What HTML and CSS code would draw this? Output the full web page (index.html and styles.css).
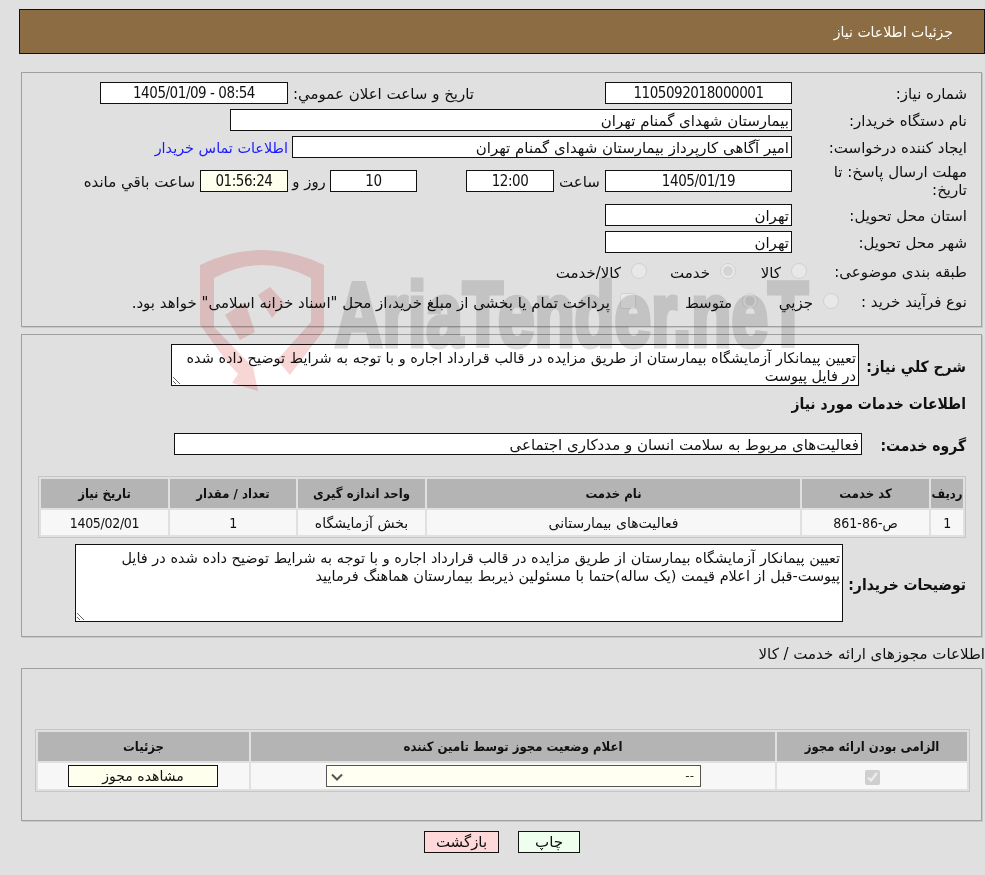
FILE: index.html
```html
<!DOCTYPE html>
<html lang="fa" dir="rtl">
<head>
<meta charset="utf-8">
<title>جزئیات اطلاعات نیاز</title>
<link rel="stylesheet" href="styles.css">
</head>
<body>
<main class="page">
  <header class="title-bar">جزئیات اطلاعات نیاز</header>

  <section class="panel panel-info">
    <div class="row">
      <div class="label">شماره نیاز:</div>
      <div class="field num w187">1105092018000001</div>
      <div class="label-mid">تاریخ و ساعت اعلان عمومي:</div>
      <div class="field num w188">08:54 - 1405/01/09</div>
    </div>
    <div class="row">
      <div class="label">نام دستگاه خریدار:</div>
      <div class="field start w562">بیمارستان شهدای گمنام تهران</div>
    </div>
    <div class="row">
      <div class="label">ایجاد کننده درخواست:</div>
      <div class="field start w500">امیر آگاهی کارپرداز بیمارستان شهدای گمنام تهران</div>
      <a class="contact" href="#">اطلاعات تماس خریدار</a>
    </div>
    <div class="row row-deadline">
      <div class="label label-wrap">مهلت ارسال پاسخ: تا تاریخ:</div>
      <div class="field num w187">1405/01/19</div>
      <div class="unit w51">ساعت</div>
      <div class="field num w88">12:00</div>
      <div class="spacer49"></div>
      <div class="field num w87">10</div>
      <div class="unit w42">روز و</div>
      <div class="field num w88 cream">01:56:24</div>
      <div class="remain">ساعت باقي مانده</div>
    </div>
    <div class="row row-province">
      <div class="label">استان محل تحویل:</div>
      <div class="field start w187">تهران</div>
    </div>
    <div class="row">
      <div class="label">شهر محل تحویل:</div>
      <div class="field start w187">تهران</div>
    </div>
    <div class="row row-category">
      <div class="label label-160">طبقه بندی موضوعی:</div>
      <label class="opt w71"><input type="radio" name="cat" disabled><span>کالا</span></label>
      <label class="opt w89"><input type="radio" name="cat" checked disabled><span>خدمت</span></label>
      <label class="opt"><input type="radio" name="cat" disabled><span>کالا/خدمت</span></label>
    </div>
    <div class="row row-process">
      <div class="label label-128">نوع فرآیند خرید :</div>
      <label class="opt w81"><input type="radio" name="proc" disabled><span>جزيي</span></label>
      <label class="opt w122"><input type="radio" name="proc" checked disabled><span>متوسط</span></label>
      <label class="opt"><input type="checkbox" disabled><span>پرداخت تمام یا بخشی از مبلغ خرید،از محل "اسناد خزانه اسلامی" خواهد بود.</span></label>
    </div>
  </section>

  <section class="panel panel-need">
    <div class="row row-desc">
      <div class="strong w107">شرح کلي نیاز:</div>
      <textarea class="area area-desc" readonly>تعیین پیمانکار آزمایشگاه بیمارستان از طریق مزایده در قالب قرارداد اجاره و با توجه به شرایط توضیح داده شده در فایل پیوست</textarea>
    </div>
    <h2 class="strong section-title">اطلاعات خدمات مورد نیاز</h2>
    <div class="row row-group">
      <div class="strong w104">گروه خدمت:</div>
      <div class="field start w688">فعالیت‌های مربوط به سلامت انسان و مددکاری اجتماعی</div>
    </div>
    <table class="grid grid-services">
      <colgroup><col class="c32"><col class="c127"><col class="c373"><col class="c127"><col class="c126"><col class="c127"></colgroup>
      <thead><tr><th>ردیف</th><th>کد خدمت</th><th>نام خدمت</th><th>واحد اندازه گیری</th><th>تعداد / مقدار</th><th>تاریخ نیاز</th></tr></thead>
      <tbody><tr><td class="num-cell">1</td><td class="num-cell">ص-86-861</td><td>فعالیت‌های بیمارستانی</td><td>بخش آزمایشگاه</td><td class="num-cell">1</td><td class="num-cell">1405/02/01</td></tr></tbody>
    </table>
    <div class="row row-notes">
      <div class="strong w123">توضیحات خریدار:</div>
      <textarea class="area area-notes" readonly>تعیین پیمانکار آزمایشگاه بیمارستان از طریق مزایده در قالب قرارداد اجاره و با توجه به شرایط توضیح داده شده در فایل پیوست-قبل از اعلام قیمت (یک ساله)حتما با مسئولین ذیربط بیمارستان هماهنگ فرمایید</textarea>
    </div>
  </section>

  <div class="license-title">اطلاعات مجوزهای ارائه خدمت / کالا</div>
  <section class="panel panel-license">
    <table class="grid grid-license">
      <colgroup><col class="c190"><col class="c524"><col class="c211"></colgroup>
      <thead><tr><th>الزامی بودن ارائه مجوز</th><th>اعلام وضعیت مجوز توسط تامین کننده</th><th>جزئیات</th></tr></thead>
      <tbody><tr>
        <td><input class="check" type="checkbox" checked disabled></td>
        <td><select class="status"><option>--</option></select></td>
        <td><button class="view" type="button">مشاهده مجوز</button></td>
      </tr></tbody>
    </table>
  </section>

  <div class="actions">
    <button class="btn btn-print" type="button">چاپ</button>
    <button class="btn btn-back" type="button">بازگشت</button>
  </div>
</main>
<svg class="watermark" width="985" height="400" viewBox="0 0 985 400">
  <path class="wm-red" fill-rule="evenodd" d="M200 265 Q262 235 324 265 L324 330 L290 375 L277 360 L311 322 L311 278 Q262 252 214 278 L214 327 L243 357 L253 367 L258 391 L232 383 L238 374 L228 363 L200 325 Z"/>
  <path class="wm-red" d="M270 287 L285 303 L272 318 L258 295 Z"/>
  <path class="wm-red" d="M225 315 L245 302 L255 332 L240 340 Z"/>
  <text class="wm-text" x="335" y="346" textLength="473" lengthAdjust="spacingAndGlyphs" direction="ltr">AriaTender.neT</text>
</svg>
</body>
</html>
```

FILE: styles.css
```css
* { box-sizing: border-box; }
html, body { margin: 0; padding: 0; }
body {
  width: 985px;
  height: 875px;
  overflow: hidden;
  position: relative;
  background: #e0e0e0;
  color: #111;
  font-family: "DejaVu Sans", sans-serif;
  font-size: 15px;
  line-height: 18px;
}
.watermark {
  position: absolute;
  left: 0;
  top: 0;
  z-index: 2;
  pointer-events: none;
  mix-blend-mode: multiply;
}
.wm-red { fill: #f9d6d6; }
.wm-text {
  font-family: "Liberation Sans", sans-serif;
  font-weight: 700;
  font-size: 90px;
  fill: #dedede;
  stroke: #dedede;
  stroke-width: 5;
}
.page { position: relative; z-index: 1; padding-top: 9px; }

.title-bar {
  height: 45px;
  margin-left: 19px;
  padding-right: 31px;
  display: flex;
  align-items: center;
  background: #8c6c42;
  border: 1px solid #111;
  color: #fff;
  font-size: 14px;
}
.panel {
  margin-left: 21px;
  margin-right: 3px;
  border: 1px solid #a0a0a0;
  box-shadow: 1px 1px 0 #c8c8c8;
}
.panel-info { height: 255px; margin-top: 18px; padding: 9px 14px 0 0; }
.panel-need { height: 303px; margin-top: 7px; padding: 9px 15px 0 0; }
.panel-license { height: 153px; margin-top: 5px; padding: 60px 11px 0 0; }

.row { display: flex; align-items: center; height: 22px; margin-bottom: 5px; }
.row-deadline { margin-top: 12px; margin-bottom: 12px; }
.row-category { margin-top: 7px; margin-bottom: 8px; }

.label { width: 175px; flex: none; white-space: nowrap; padding-top: 2px; }
.label-wrap { padding-left: 25px; white-space: normal; padding-top: 0; }
.label-160 { width: 160px; }
.label-128 { width: 128px; }
.label-mid { width: 317px; flex: none; padding: 2px 131px 0 0; white-space: nowrap; }

.field {
  height: 22px;
  flex: none;
  background: #fff;
  border: 1px solid #111;
  text-align: center;
  line-height: 20px;
  padding: 0 2px;
  white-space: nowrap;
  overflow: hidden;
}
.num {
  font-family: "DejaVu Sans Condensed", "DejaVu Sans", sans-serif;
  letter-spacing: -0.45px;
}
.start { text-align: start; padding-top: 1px; }
.cream { background: #ffffee; }
.w187 { width: 187px; }
.w188 { width: 188px; }
.w562 { width: 562px; }
.w500 { width: 500px; }
.w88 { width: 88px; }
.w87 { width: 87px; }
.w688 { width: 688px; }
.w51 { width: 51px; text-align: center; }
.w42 { width: 42px; text-align: center; }
.spacer49 { width: 49px; flex: none; }
.unit { flex: none; white-space: nowrap; padding-top: 2px; }
.remain { margin-right: 5px; white-space: nowrap; padding-top: 2px; }
.contact {
  margin-right: 4px;
  padding-top: 2px;
  color: #1a1aff;
  font-size: 14.4px;
  text-decoration: none;
  white-space: nowrap;
}

.opt { display: flex; align-items: center; gap: 10px; flex: none; white-space: nowrap; }
.opt span { position: relative; top: 2px; }
.opt input { width: 16px; height: 16px; margin: 0; flex: none; opacity: 0.6; }
.w71 { width: 71px; }
.w89 { width: 89px; }
.w81 { width: 81px; }
.w122 { width: 122px; }

.strong {
  font-family: "DejaVu Sans Condensed", "DejaVu Sans", sans-serif;
  font-weight: 700;
  font-size: 15.5px;
  flex: none;
  white-space: nowrap;
  padding-top: 4px;
}
.w107 { width: 107px; }
.w104 { width: 104px; }
.w123 { width: 123px; }
.section-title { margin: 0; height: 20px; padding-top: 2px; }

.area {
  display: block;
  flex: none;
  margin: 0;
  padding: 4px 2px 2px;
  background: #fff;
  border: 1px solid #111;
  border-radius: 0;
  color: #111;
  font: inherit;
  font-size: 14.5px;
  line-height: 18px;
  overflow: hidden;
}
.area-desc { width: 688px; height: 42px; }
.area-notes { width: 768px; height: 78px; }
.row-desc { height: 42px; margin-bottom: 7px; }
.row-group { margin-top: 20px; margin-bottom: 21px; }
.row-notes { height: 78px; margin-top: 6px; margin-bottom: 0; }

.grid {
  table-layout: fixed;
  border-collapse: separate;
  border-spacing: 2px;
  border: 1px solid #c6c6c6;
  font-size: 14px;
}
.grid-services { width: 928px; }
.grid-license { width: 935px; }
.grid th {
  height: 29px;
  padding: 0;
  background: #b4b4b4;
  font-family: "DejaVu Sans Condensed", "DejaVu Sans", sans-serif;
  font-size: 13px;
  font-weight: 700;
}
.grid td {
  height: 25px;
  padding: 0;
  background: #f7f7f7;
  text-align: center;
}
.grid .num-cell {
  font-family: "DejaVu Sans Condensed", "DejaVu Sans", sans-serif;
  font-size: 14px;
  letter-spacing: -0.3px;
}
.grid-license td { height: 26px; }
.c32 { width: 32px; }
.c127 { width: 127px; }
.c373 { width: 373px; }
.c126 { width: 126px; }
.c190 { width: 190px; }
.c524 { width: 524px; }
.c211 { width: 211px; }

.check { width: 15px; height: 15px; margin: 0; vertical-align: middle; }
.status {
  display: block;
  width: 375px;
  height: 22px;
  margin: 0 74px 0 0;
  padding: 0 6px 0 0;
  appearance: none;
  background: #fffff2 url("data:image/svg+xml,%3Csvg xmlns='http://www.w3.org/2000/svg' width='12' height='8'%3E%3Cpath d='M1 1.5L6 6.5L11 1.5' fill='none' stroke='%23555' stroke-width='2'/%3E%3C/svg%3E") no-repeat 4px 7px;
  border: 1px solid #555;
  border-radius: 0;
  font-family: "DejaVu Sans", sans-serif;
  font-size: 12px;
  color: #333;
}
.view {
  display: block;
  width: 150px;
  height: 22px;
  margin: 0 31px 0 0;
  padding: 0;
  background: #ffffee;
  border: 1px solid #111;
  border-radius: 0;
  font: inherit;
  color: #111;
}
.license-title { margin-top: 8px; white-space: nowrap; }
.actions { display: flex; justify-content: center; gap: 19px; margin: 10px 0 0 19px; }
.btn {
  height: 22px;
  padding: 0;
  border: 1px solid #111;
  border-radius: 0;
  font: inherit;
  color: #111;
}
.btn-print { width: 62px; background: #eeffee; }
.btn-back { width: 75px; background: #ffd9d9; }
```
